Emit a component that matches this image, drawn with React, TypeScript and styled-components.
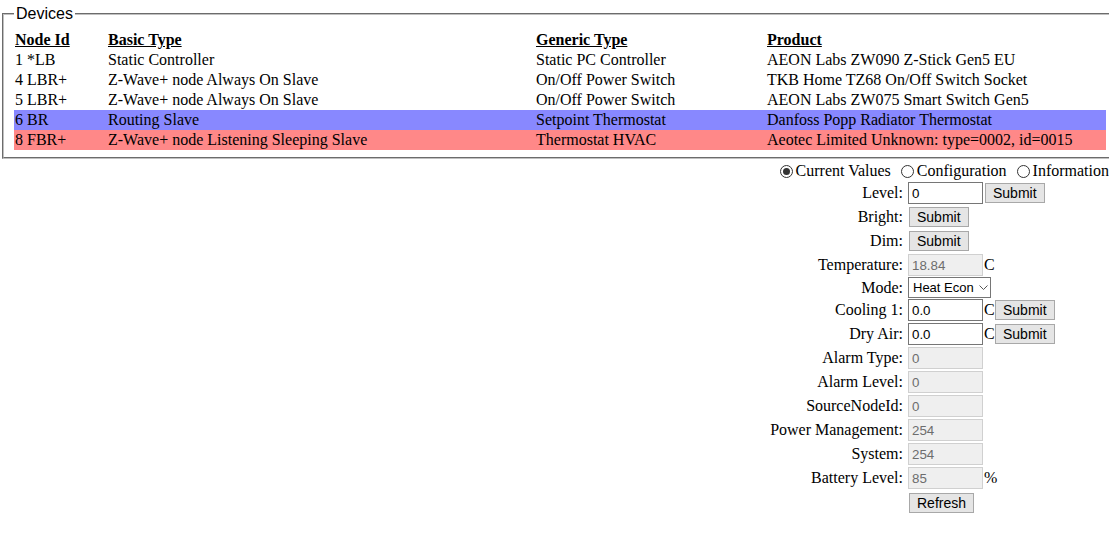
import * as React from "react";
import styled, {createGlobalStyle} from "styled-components";

const GlobalStyle = createGlobalStyle`
  html, body {
    margin: 0;
    padding: 0;
    background: #fff;
    overflow-x: hidden;
  }
  body {
    font-family: "Liberation Serif", "Times New Roman", serif;
    font-size: 16px;
    color: #000;
  }
`;

interface Device {
  id: string
  basic: string
  generic: string
  product: string
  state?: "selected" | "sleeping"
}

const devices: Device[] = [
  { id: "1 *LB", basic: "Static Controller", generic: "Static PC Controller", product: "AEON Labs ZW090 Z-Stick Gen5 EU" },
  { id: "4 LBR+", basic: "Z-Wave+ node Always On Slave", generic: "On/Off Power Switch", product: "TKB Home TZ68 On/Off Switch Socket" },
  { id: "5 LBR+", basic: "Z-Wave+ node Always On Slave", generic: "On/Off Power Switch", product: "AEON Labs ZW075 Smart Switch Gen5" },
  { id: "6 BR", basic: "Routing Slave", generic: "Setpoint Thermostat", product: "Danfoss Popp Radiator Thermostat", state: "selected" },
  { id: "8 FBR+", basic: "Z-Wave+ node Listening Sleeping Slave", generic: "Thermostat HVAC", product: "Aeotec Limited Unknown: type=0002, id=0015", state: "sleeping" },
];

const rowColors = {
  selected: "#8888ff",
  sleeping: "#ff8888",
};

export default function App() {
  return <Page>
    <GlobalStyle/>
    <DevicesBox>
      <Legend>Devices</Legend>
      <DeviceTable>
        <colgroup>
          <col style={{ width: 93 }}/>
          <col style={{ width: 428 }}/>
          <col style={{ width: 231 }}/>
          <col/>
        </colgroup>
        <thead>
          <tr>
            <HeadCell>Node Id</HeadCell>
            <HeadCell>Basic Type</HeadCell>
            <HeadCell>Generic Type</HeadCell>
            <HeadCell>Product</HeadCell>
          </tr>
        </thead>
        <tbody>
          {devices.map(d =>
            <DeviceRow key={d.id} state={d.state}>
              <Cell>{d.id}</Cell>
              <Cell>{d.basic}</Cell>
              <Cell>{d.generic}</Cell>
              <Cell>{d.product}</Cell>
            </DeviceRow>)}
        </tbody>
      </DeviceTable>
    </DevicesBox>

    <ControlsArea>
      <Controls>
        <Tabs>
          <TabOption><Radio type="radio" name="view" defaultChecked/>Current Values</TabOption>
          <TabOption><Radio type="radio" name="view"/>Configuration</TabOption>
          <TabOption><Radio type="radio" name="view"/>Information</TabOption>
        </Tabs>
        <Form>
          <FormRow>
            <Label>Level:</Label>
            <Value><TextInput defaultValue="0"/><Button gap={2}>Submit</Button></Value>
          </FormRow>
          <FormRow>
            <Label>Bright:</Label>
            <Value><Button gap={1}>Submit</Button></Value>
          </FormRow>
          <FormRow>
            <Label>Dim:</Label>
            <Value><Button gap={1}>Submit</Button></Value>
          </FormRow>
          <FormRow h={21}>
            <Label>Temperature:</Label>
            <Value><TextInput disabled defaultValue="18.84"/><Unit>C</Unit></Value>
          </FormRow>
          <FormRow h={20}>
            <Label>Mode:</Label>
            <Value>
              <SelectWrap>
                <Select defaultValue="heatEcon">
                  <option value="heat">Heat</option>
                  <option value="heatEcon">Heat Econ</option>
                  <option value="off">Off</option>
                </Select>
                <Chevron width="9" height="5" viewBox="0 0 9 5">
                  <path d="M0.5 0.5 L4.5 4.5 L8.5 0.5" fill="none" stroke="#555" strokeWidth="1"/>
                </Chevron>
              </SelectWrap>
            </Value>
          </FormRow>
          <FormRow>
            <Label>Cooling 1:</Label>
            <Value><TextInput defaultValue="0.0"/><Unit>C</Unit><Button>Submit</Button></Value>
          </FormRow>
          <FormRow>
            <Label>Dry Air:</Label>
            <Value><TextInput defaultValue="0.0"/><Unit>C</Unit><Button>Submit</Button></Value>
          </FormRow>
          <FormRow>
            <Label>Alarm Type:</Label>
            <Value><TextInput disabled defaultValue="0"/></Value>
          </FormRow>
          <FormRow>
            <Label>Alarm Level:</Label>
            <Value><TextInput disabled defaultValue="0"/></Value>
          </FormRow>
          <FormRow>
            <Label>SourceNodeId:</Label>
            <Value><TextInput disabled defaultValue="0"/></Value>
          </FormRow>
          <FormRow>
            <Label>Power Management:</Label>
            <Value><TextInput disabled defaultValue="254"/></Value>
          </FormRow>
          <FormRow>
            <Label>System:</Label>
            <Value><TextInput disabled defaultValue="254"/></Value>
          </FormRow>
          <FormRow>
            <Label>Battery Level:</Label>
            <Value><TextInput disabled defaultValue="85"/><Unit>%</Unit></Value>
          </FormRow>
          <FormRow h={24}>
            <Label/>
            <Value><Button gap={1}>Refresh</Button></Value>
          </FormRow>
        </Form>
      </Controls>
    </ControlsArea>
  </Page>;
}

const Page = styled.div`
  width: 1120px;
  padding-top: 5px;
`;

const DevicesBox = styled.fieldset`
  margin: 0 2px;
  padding: 7px 10px 7px 10px;
  border: 2px groove rgb(192, 192, 192);
  min-width: 0;
`;

const Legend = styled.legend`
  font-family: "Liberation Sans", Arial, sans-serif;
  font-size: 16px;
  line-height: 18px;
  padding: 0 2px;
`;

const DeviceTable = styled.table`
  width: 100%;
  border-collapse: collapse;
  table-layout: fixed;
`;

const HeadCell = styled.th`
  text-align: left;
  font-weight: bold;
  text-decoration: underline;
  padding: 1px;
  line-height: 18px;
  white-space: nowrap;
`;

const DeviceRow = styled.tr<{ state?: "selected" | "sleeping" }>`
  background: ${({ state }) => state ? rowColors[state] : "transparent"};
`;

const Cell = styled.td`
  padding: 1px;
  line-height: 18px;
  white-space: nowrap;
`;

const ControlsArea = styled.div`
  display: flex;
  justify-content: flex-end;
  padding-right: 11px;
`;

const Controls = styled.div`
  width: 340px;
  display: flex;
  flex-direction: column;
`;

const Tabs = styled.div`
  display: flex;
  justify-content: flex-end;
  gap: 10px;
  margin-top: 2px;
  height: 20px;
  line-height: 20px;
  white-space: nowrap;
`;

const TabOption = styled.label`
  display: flex;
  align-items: center;
  gap: 3px;
`;

const Radio = styled.input`
  appearance: none;
  margin: 0;
  width: 13px;
  height: 13px;
  border: 1px solid #333;
  border-radius: 50%;
  background: #fff;
  box-sizing: border-box;
  display: grid;
  place-items: center;
  &:checked::after {
    content: "";
    width: 7px;
    height: 7px;
    border-radius: 50%;
    background: #333;
  }
`;

const Form = styled.div`
  display: flex;
  flex-direction: column;
  gap: 2px;
  margin-top: 1px;
`;

const FormRow = styled.div<{ h?: number }>`
  display: grid;
  grid-template-columns: 134px auto;
  column-gap: 5px;
  align-items: center;
  height: ${({ h }) => h ?? 22}px;
`;

const Label = styled.span`
  text-align: right;
  white-space: nowrap;
  line-height: 18px;
`;

const Value = styled.div`
  display: flex;
  align-items: center;
`;

const controlFont = `
  font-family: "Liberation Sans", Arial, sans-serif;
  font-size: 13.33px;
`;

const TextInput = styled.input`
  ${controlFont};
  box-sizing: border-box;
  width: 75px;
  height: 22px;
  padding: 1px 3px;
  margin: 0;
  border: 1px solid #767676;
  background: #fff;
  color: #000;
  outline: none;
  &:disabled {
    background: #efefef;
    border-color: #d0d0d0;
    color: #6d6d6d;
  }
`;

const Unit = styled.span`
  width: 11px;
  line-height: 18px;
  padding-left: 1px;
`;

const Button = styled.button<{ gap?: number }>`
  ${controlFont};
  font-size: 14px;
  box-sizing: border-box;
  height: 20px;
  margin: 0 0 0 ${({ gap }) => gap ?? 0}px;
  padding: 0 7px;
  border: 1px solid #a8a8a8;
  background: #e5e5e5;
  color: #000;
`;

const SelectWrap = styled.div`
  position: relative;
  display: inline-flex;
`;

const Select = styled.select`
  ${controlFont};
  font-size: 13px;
  appearance: none;
  box-sizing: border-box;
  width: 83px;
  height: 21px;
  margin: 0;
  padding: 0 16px 0 4px;
  border: 1px solid #767676;
  border-radius: 0;
  background: #fff;
  color: #000;
`;

const Chevron = styled.svg`
  position: absolute;
  right: 3px;
  top: 8px;
  pointer-events: none;
`;
